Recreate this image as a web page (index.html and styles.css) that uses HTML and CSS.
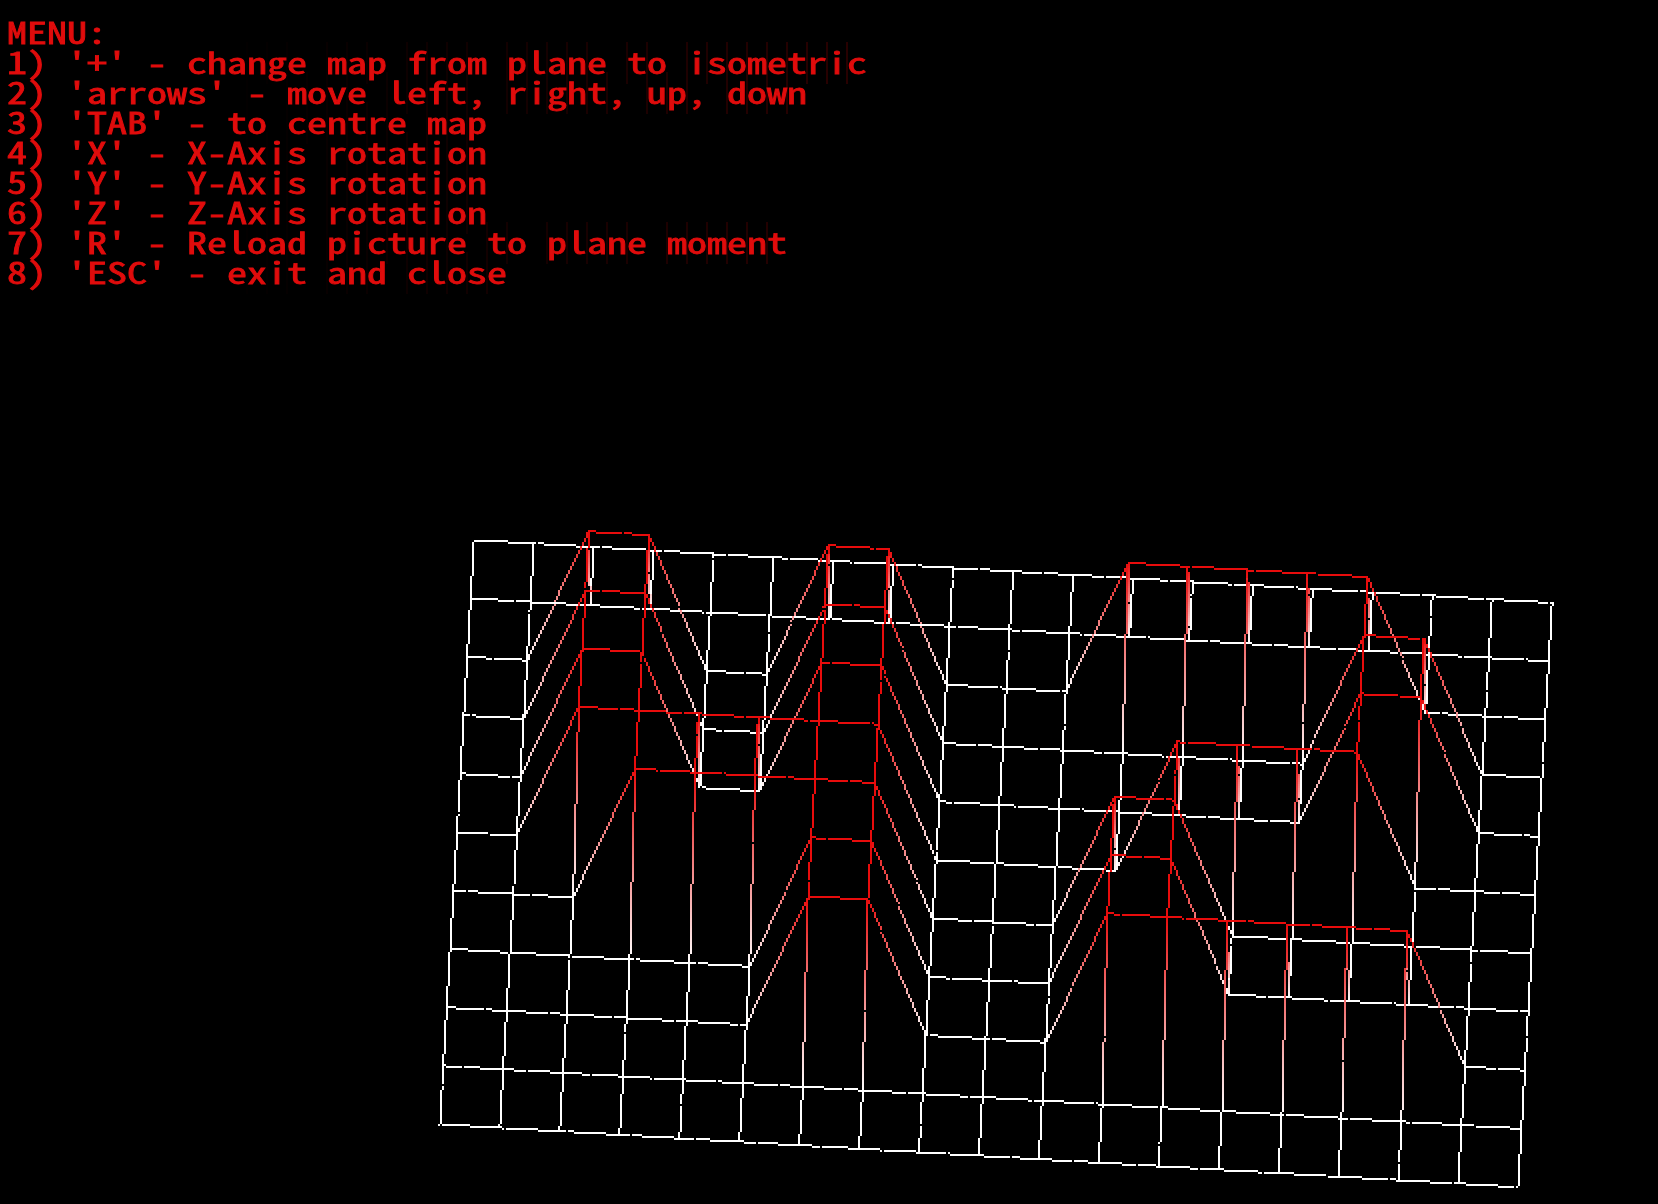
FILE: index.html
```
<!DOCTYPE html>
<html lang="en">
<head>
<meta charset="utf-8">
<title>FdF</title>
<link rel="stylesheet" href="styles.css">
</head>
<body>
<main class="window">
<canvas class="map" width="829" height="602"></canvas>
<pre class="menu">MENU:
1) '+' - change map from plane to isometric
2) 'arrows' - move left, right, up, down
3) 'TAB' - to centre map
4) 'X' - X-Axis rotation
5) 'Y' - Y-Axis rotation
6) 'Z' - Z-Axis rotation
7) 'R' - Reload picture to plane moment
8) 'ESC' - exit and close</pre>
</main>
<script src="map.js"></script>
</body>
</html>
```
FILE: styles.css
```
body {
  margin: 0;
  background: #000;
}

.window {
  position: relative;
  width: 1658px;
  height: 1204px;
  overflow: hidden;
  background: #000;
}

.map {
  display: block;
  width: 1658px;
  height: 1204px;
  image-rendering: pixelated;
}

.menu {
  position: absolute;
  left: 6.5px;
  top: 16px;
  margin: 0;
  color: #e00c0c;
  font-family: "Noto Sans Mono CJK SC", "Noto Sans Mono CJK JP", "Liberation Mono", monospace;
  font-size: 30px;
  line-height: 30px;
  -webkit-text-stroke: 0.8px #e00c0c;
  transform: scaleX(1.33333);
  transform-origin: left top;
}
```
FILE: map.js
```
const heights = [
  '...................',
  '...................',
  '..##..##...#####...',
  '..##..##.......##..',
  '..##..##.......##..',
  '..######....####...',
  '...#####...##......',
  '......##...##......',
  '......##...######..',
  '...................',
  '...................'
];

const origin = [237, 270.001];
const col = [29.948, 1.745];
const row = [-1.7025, 29.214];
const lift = [0.98, -66.13];
const low = [255, 255, 255];
const high = [232, 12, 12];

const ctx = document.querySelector('.map').getContext('2d');

function vertex(c, r) {
  const up = heights[r][c] === '#' ? 1 : 0;
  return {
    x: origin[0] + c * col[0] + r * row[0] + up * lift[0],
    y: origin[1] + c * col[1] + r * row[1] + up * lift[1],
    color: up ? high : low
  };
}

function edge(a, b) {
  const dx = b.x - a.x;
  const dy = b.y - a.y;
  const steps = Math.trunc(Math.max(Math.abs(dx), Math.abs(dy)));
  for (let i = 0; i < steps; i++) {
    const t = i / steps;
    const rgb = a.color.map((v, k) => Math.round(v + (b.color[k] - v) * t));
    ctx.fillStyle = `rgb(${rgb.join(',')})`;
    ctx.fillRect(Math.floor(a.x + dx * t), Math.floor(a.y + dy * t), 1, 1);
  }
}

heights.forEach((line, r) => {
  for (let c = 0; c < line.length; c++) {
    if (c + 1 < line.length) edge(vertex(c, r), vertex(c + 1, r));
    if (r + 1 < heights.length) edge(vertex(c, r), vertex(c, r + 1));
  }
});

// Faint left edge of each character cell, growing brighter along the line.
document.querySelector('.menu').textContent.split('\n').forEach((line, n) => {
  [...line].forEach((ch, j) => {
    if (n === 0 || ch === ' ' || j < 12) return;
    ctx.fillStyle = `rgb(${Math.round((j - 10) * 1.25)},0,0)`;
    ctx.fillRect(3 + j * 10, 6 + n * 15, 1, 21);
  });
});
```
